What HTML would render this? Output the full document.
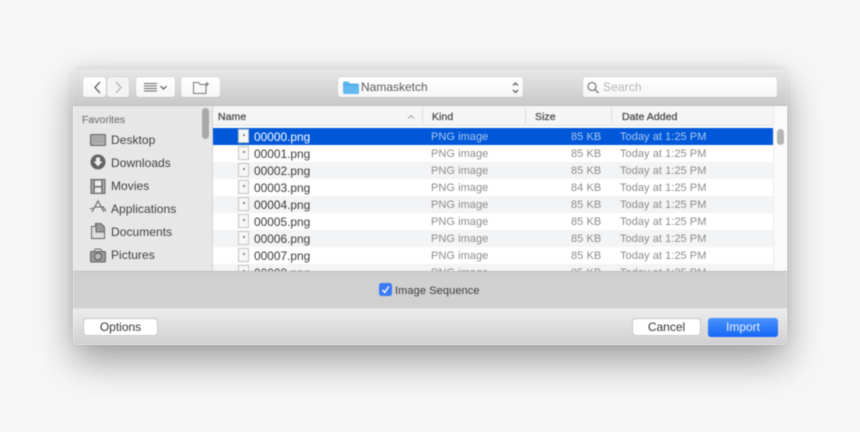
<!DOCTYPE html>
<html><head><meta charset="utf-8"><style>
html,body{margin:0;padding:0}
body{width:860px;height:432px;background:#f7f7f7;position:relative;overflow:hidden;font-family:"Liberation Sans",sans-serif;color:#3c3c3c}
div,span{position:absolute;box-sizing:border-box;white-space:nowrap}
svg{position:absolute;overflow:visible}
#shadow{left:73px;top:68px;width:714px;height:277px;border-radius:6px;box-shadow:0 16px 38px rgba(0,0,0,.36),0 0 10px rgba(0,0,0,.07)}
#win{left:73px;top:68px;width:714px;height:277px;border-radius:5px;overflow:hidden;background:#fff;filter:blur(.4px)}
#tb{left:0;top:0;width:714px;height:38px;background:linear-gradient(#e8e8e8,#c9c9c9);border-bottom:1px solid #c0c0c0;border-top:1px solid #d6d6d6}
.btn{background:linear-gradient(#fff,#f6f6f6);border-radius:3px;box-shadow:0 0 0 .5px #c8c8c8,0 .5px 1px rgba(0,0,0,.18)}
#side{left:0;top:38px;width:140px;height:165px;background:#e7e7e7;border-right:1px solid #d4d4d4}
.si{font-size:12px;left:38px;color:#404040;letter-spacing:.05px}
#list{left:140px;top:38px;width:560px;height:165px;background:#fff;overflow:hidden}
#hd{left:0;top:0;width:560px;height:20px;background:#f5f5f5;border-bottom:1px solid #e2e2e2}
.h{font-size:10.5px;color:#4a4a4a;top:5px;letter-spacing:.05px;-webkit-text-stroke:.25px #4a4a4a}
.sep{top:1px;width:1px;height:17px;background:#e0e0e0}
.r{left:0;width:560px;height:17px}
.r.g{background:#f3f4f5}
.r.s{background:#0058d8}
.r span{font-size:11px;top:3px;color:#8c8c8c}
.r .n{left:41px;font-size:11.9px;color:#3a3a3a;top:2px}
.r .k{left:218px;letter-spacing:.05px}
.r .z{left:358px;letter-spacing:.05px}
.r .d{left:407px;letter-spacing:.05px}
.r.s span{color:#a9c8f4}
.r.s .n{color:#fff}
.f{left:25px;top:1px;width:11px;height:14px;background:#f7f7f7;border:1px solid #c4c4c4}
.f:after{content:"";position:absolute;left:4px;top:4px;width:2px;height:2px;background:#888}
#track{left:700px;top:38px;width:14px;height:165px;background:#fafafa;border-left:1px solid #ececec}
#acc{left:0;top:203px;width:714px;height:37px;background:#d0d0d0;border-top:1px solid #bcbcbc}
#bot{left:0;top:240px;width:714px;height:37px;background:linear-gradient(#ececec,#d0d0d0);border-top:1px solid #dedede}
.b{font-size:12px;text-align:center;color:#333;background:#fff;border-radius:3px;box-shadow:0 0 0 1px #c9c9c9;height:16px;line-height:16px;top:10px}
</style></head><body>
<div id="shadow"></div>
<div id="win">
 <div id="tb">
  <div class="btn" style="left:10px;top:8px;width:23px;height:20px"></div>
  <div class="btn" style="left:34px;top:8px;width:22px;height:20px;background:#f3f3f3"></div>
  <svg style="left:0;top:0" width="714" height="38" fill="none">
   <path d="M27 13l-5 5.500 5 5.500" stroke="#555" stroke-width="1.300"/>
   <path d="M43 13l5 5.500-5 5.500" stroke="#b0b0b0" stroke-width="1.300"/>
  </svg>
  <div class="btn" style="left:63px;top:8px;width:39px;height:20px"></div>
  <svg style="left:0;top:0" width="714" height="38" fill="none">
   <path d="M71 14.500h13M71 17h13M71 19.500h13M71 22h13" stroke="#666"/>
   <path d="M87.500 17l3 3 3-3" stroke="#555" stroke-width="1.200"/>
  </svg>
  <div class="btn" style="left:108px;top:8px;width:39px;height:20px"></div>
  <svg style="left:0;top:0" width="714" height="38" fill="none">
   <path d="M120.500 24.500v-11h5l1.500 2h6v2M120.500 24.500h12.500v-7" stroke="#777"/>
   <path d="M134 13v4M132 15h4" stroke="#777"/>
  </svg>
  <div class="btn" style="left:265px;top:8px;width:185px;height:20px"></div>
  <svg style="left:0;top:0" width="714" height="38">
   <path d="M270 14q0-1.500 1.500-1.500h4l1.500 2h7.500q1.500 0 1.500 1.500v7.500q0 1.500-1.500 1.500h-13q-1.500 0-1.500-1.500z" fill="#62b9f0"/>
   <path d="M270 15.500h15.500" stroke="#4aa3e0" fill="none"/>
   <path d="M440 16.500l2.500-2.500 2.500 2.500M440 21l2.500 2.500 2.500-2.500" stroke="#444" stroke-width="1.100" fill="none"/>
  </svg>
  <span style="left:288px;top:11px;font-size:12px;color:#5a5a5a;letter-spacing:0">Namasketch</span>
  <div class="btn" style="left:510px;top:8px;width:194px;height:20px"></div>
  <svg style="left:0;top:0" width="714" height="38" fill="none">
   <circle cx="519" cy="17.500" r="4" stroke="#666" stroke-width="1.100"/>
   <path d="M522 20.500l3.500 3.500" stroke="#666" stroke-width="1.200"/>
  </svg>
  <span style="left:530px;top:11px;font-size:12px;color:#b4b4b4;letter-spacing:.1px">Search</span>
 </div>

 <div id="side">
  <span style="left:9px;top:8px;font-size:10.500px;color:#7d7d7d;-webkit-text-stroke:.2px #7d7d7d">Favorites</span>
  <span class="si" style="top:27px">Desktop</span>
  <span class="si" style="top:50px">Downloads</span>
  <span class="si" style="top:73px">Movies</span>
  <span class="si" style="top:96px">Applications</span>
  <span class="si" style="top:119px">Documents</span>
  <span class="si" style="top:142px">Pictures</span>
  <svg style="left:0;top:0" width="140" height="165" fill="none">
   <rect x="17.500" y="28.500" width="15" height="11" rx="1" fill="#a8a8a8" stroke="#666"/>
   <path d="M22 38h1M25 38h1M28 38h1" stroke="#eee"/>
   <circle cx="25" cy="56" r="7.500" fill="#636363"/>
   <path d="M23 51.500h4v4h2.500L25 60.500l-4.500-5H23z" fill="#eee"/>
   <rect x="18" y="73.500" width="14" height="14" fill="#a8a8a8" stroke="#666"/>
   <path d="M21 74v13M29 74v13M21 80.500h8" stroke="#666" stroke-width="1"/>
   <rect x="22" y="75" width="6" height="5" fill="#eee"/><rect x="22" y="82" width="6" height="4.500" fill="#eee"/>
   <path d="M19 106l6-11 6 11M22 101h9M17 103l3-1M30 101l3 4" stroke="#666" stroke-width="1.100"/>
   <path d="M18.500 120.500h4v-3h5l4 4v11h-13z" stroke="#666" fill="#ddd"/>
   <path d="M23 117.500h5l3.500 3.500v5h-8.500z" fill="#999" stroke="#666"/>
   <rect x="17.500" y="145.500" width="15" height="10.500" rx="1" fill="#999" stroke="#666"/>
   <path d="M21 145l1.500-2h5l1.500 2" stroke="#666"/>
   <circle cx="25" cy="150.500" r="3.500" fill="#bbb" stroke="#555"/>
  </svg>
  <div style="left:129px;top:2px;width:7px;height:31px;border-radius:4px;background:#a8a8a8"></div>
 </div>

 <div id="list">
  <div id="hd">
   <span class="h" style="left:5px">Name</span>
   <span class="h" style="left:219px">Kind</span>
   <span class="h" style="left:322px">Size</span>
   <span class="h" style="left:409px">Date Added</span>
   <div class="sep" style="left:209px"></div>
   <div class="sep" style="left:312px"></div>
   <div class="sep" style="left:398px"></div>
   <svg style="left:0;top:0" width="210" height="20" fill="none"><path d="M195 12.500l3-3 3 3" stroke="#aaa" stroke-width="1.100"/></svg>
  </div>
  <div class="r s" style="top:22px"><div class="f"></div><span class="n">00000.png</span><span class="k">PNG image</span><span class="z">85 KB</span><span class="d">Today at 1:25 PM</span></div>
  <div class="r" style="top:39px"><div class="f"></div><span class="n">00001.png</span><span class="k">PNG image</span><span class="z">85 KB</span><span class="d">Today at 1:25 PM</span></div>
  <div class="r g" style="top:56px"><div class="f"></div><span class="n">00002.png</span><span class="k">PNG image</span><span class="z">85 KB</span><span class="d">Today at 1:25 PM</span></div>
  <div class="r" style="top:73px"><div class="f"></div><span class="n">00003.png</span><span class="k">PNG image</span><span class="z">84 KB</span><span class="d">Today at 1:25 PM</span></div>
  <div class="r g" style="top:90px"><div class="f"></div><span class="n">00004.png</span><span class="k">PNG image</span><span class="z">85 KB</span><span class="d">Today at 1:25 PM</span></div>
  <div class="r" style="top:107px"><div class="f"></div><span class="n">00005.png</span><span class="k">PNG image</span><span class="z">85 KB</span><span class="d">Today at 1:25 PM</span></div>
  <div class="r g" style="top:124px"><div class="f"></div><span class="n">00006.png</span><span class="k">PNG image</span><span class="z">85 KB</span><span class="d">Today at 1:25 PM</span></div>
  <div class="r" style="top:141px"><div class="f"></div><span class="n">00007.png</span><span class="k">PNG image</span><span class="z">85 KB</span><span class="d">Today at 1:25 PM</span></div>
  <div class="r g" style="top:158px"><div class="f"></div><span class="n">00008.png</span><span class="k">PNG image</span><span class="z">85 KB</span><span class="d">Today at 1:25 PM</span></div>
 </div>
 <div id="track"><div style="left:3px;top:23px;width:7px;height:16px;border-radius:4px;background:#b5b5b5"></div></div>

 <div id="acc">
  <div style="left:306px;top:11px;width:13px;height:13px;border-radius:2.500px;background:#3b7cf6"></div>
  <svg style="left:306px;top:11px" width="13" height="13" fill="none"><path d="M3.500 7l2.200 2.500 4-6" stroke="#fff" stroke-width="1.400"/></svg>
  <span style="left:322px;top:13px;font-size:11px;color:#3c3c3c;letter-spacing:.1px">Image Sequence</span>
 </div>
 <div id="bot">
  <div class="b" style="left:11px;width:73px">Options</div>
  <div class="b" style="left:560px;width:67px">Cancel</div>
  <div class="b" style="left:635px;width:70px;height:19px;line-height:18px;top:9px;background:linear-gradient(#4b93fb,#1467f6);color:#e9f1ff;box-shadow:none">Import</div>
 </div>
</div>
</body></html>
